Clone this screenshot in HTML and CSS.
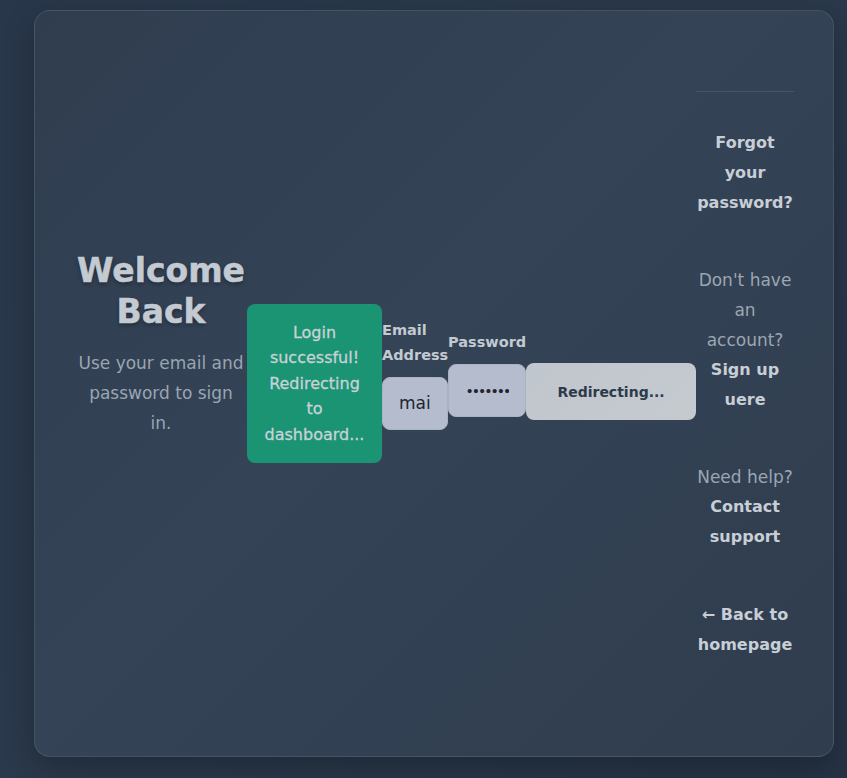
FILE: index.html
```html
<!DOCTYPE html>
<html lang="en">
<head>
<meta charset="utf-8">
<title>Welcome Back</title>
<link rel="stylesheet" href="styles.css">
</head>
<body>
<main class="card">
  <section class="intro">
    <h1 class="title">Welcome Back</h1>
    <p class="subtitle">Use your email and password to sign in.</p>
  </section>
  <div class="success">Login successful! Redirecting to dashboard...</div>
  <form class="form">
    <div class="field field-email">
      <label class="label" for="email">Email Address</label>
      <input class="input" id="email" type="text" value="mail@example.com">
    </div>
    <div class="field field-password">
      <label class="label" for="password">Password</label>
      <input class="input input-password" id="password" type="password" value="password123">
    </div>
    <button class="submit" type="button">Redirecting...</button>
  </form>
  <aside class="links">
    <hr class="divider">
    <a class="link strong" href="#">Forgot your password?</a>
    <div class="link-block"><span class="muted">Don't have an account?</span><a class="strong" href="#">Sign up uere</a></div>
    <div class="link-block"><span class="muted">Need help?</span><a class="strong" href="#">Contact support</a></div>
    <a class="link strong" href="#">← Back to homepage</a>
  </aside>
</main>
</body>
</html>
```

FILE: styles.css
```css
* { box-sizing: border-box; }

html, body {
  margin: 0;
  height: 100%;
}

body {
  padding: 10px 13px 21px 34px;
  background: linear-gradient(135deg, #28374a 0%, #2a394b 50%, #253345 100%);
  font-family: "DejaVu Sans", "Noto Sans", sans-serif;
  overflow: hidden;
}

.card {
  width: 800px;
  height: 747px;
  display: flex;
  align-items: center;
  padding: 0 40px;
  border: 1px solid rgba(255, 255, 255, 0.1);
  border-radius: 16px;
  background: linear-gradient(135deg, #2f3d4f 0%, #344356 45%, #2f3d4e 100%);
  box-shadow: 0 10px 30px rgba(0, 0, 0, 0.25);
}

.intro {
  flex: none;
  width: 172px;
  padding-bottom: 80px;
  display: flex;
  flex-direction: column;
  align-items: center;
  text-align: center;
}

.title {
  margin: 0 0 16px;
  font-size: 33px;
  line-height: 41px;
  font-weight: 800;
  color: #c3cad2;
  text-shadow: 0 2px 4px rgba(0, 0, 0, 0.35);
  -webkit-text-stroke: 0.5px currentColor;
}

.subtitle {
  max-width: 168px;
  margin: 0;
  font-size: 17px;
  line-height: 30px;
  color: #9aa5b2;
}

.success {
  flex: none;
  width: 135px;
  padding: 16px;
  border-radius: 8px;
  background: #1a9473;
  color: #c9d2d8;
  font-size: 16px;
  line-height: 25.6px;
  text-align: center;
  -webkit-text-stroke: 0.3px currentColor;
}

.form {
  flex: none;
  display: flex;
  align-items: center;
}

.field {
  display: flex;
  flex-direction: column;
  margin-bottom: 20px;
}

.field-email { width: 66px; }
.field-password { width: 78px; }

.label {
  margin-bottom: 9px;
  font-size: 14.5px;
  line-height: 25px;
  font-weight: 600;
  color: #c3cad2;
}

.input {
  width: 100%;
  height: 53px;
  padding: 0 16px;
  border: 1px solid #a9b3c3;
  border-radius: 8px;
  background: #b4bccd;
  color: #1e2530;
  font-family: "DejaVu Sans", sans-serif;
  font-size: 17px;
  outline: none;
}

.input-password {
  padding: 0 16px 0 18px;
  font-family: "Liberation Sans", sans-serif;
  font-size: 15px;
  letter-spacing: 1px;
}

.submit {
  width: 170px;
  height: 57px;
  margin-top: 16px;
  border: none;
  border-radius: 8px;
  background: linear-gradient(135deg, #c0c6cd 0%, #c4cace 100%);
  color: #2d3a4b;
  font-family: "DejaVu Sans", sans-serif;
  font-size: 14px;
  font-weight: 600;
}

.links {
  flex: none;
  width: 98px;
  display: flex;
  flex-direction: column;
  padding: 0 0 16px;
  text-align: center;
  font-size: 17px;
  line-height: 30px;
}

.divider {
  width: 100%;
  margin: 0 0 36px;
  border: none;
  border-top: 1px solid #46566a;
}

.link {
  display: block;
}

.link-block {
  display: flex;
  flex-direction: column;
  margin-top: 47px;
}

.link-block + .link { margin-top: 48px; }

.strong {
  color: #c8ced6;
  font-size: 16px;
  line-height: 30px;
  font-weight: 600;
  text-decoration: none;
}

.muted {
  color: #9ca6b2;
}
```
